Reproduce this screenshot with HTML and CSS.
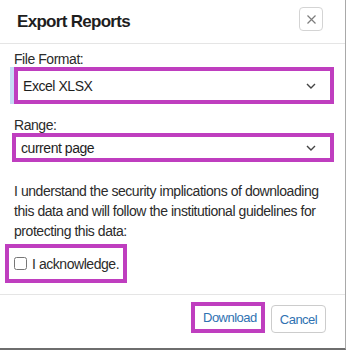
FILE: index.html
```html
<!DOCTYPE html>
<html>

<head>
    <meta charset="utf-8">
    <title>Export Reports</title>
    <link rel="stylesheet" href="styles.css">
</head>

<body>

    <div class="modal">
        <div class="modal-header">
            <h4 class="modal-title">Export Reports</h4>
            <button type="button" class="close">
                <svg width="9" height="9" viewBox="0 0 9 9">
                    <path d="M0.5 0.5L8.5 8.5M8.5 0.5L0.5 8.5" stroke="#7d7d7d" stroke-width="1.2" fill="none"/>
                </svg>
            </button>
        </div>

        <div class="modal-body">
            <label class="field-label">File Format:</label>
            <div class="hl hl-select hl-focus">
                <div class="select">
                    <span>Excel XLSX</span>
                    <svg width="10" height="6" viewBox="0 0 10 6">
                        <polyline points="1,1 5,5 9,1" stroke="#444" stroke-width="1.4" fill="none"/>
                    </svg>
                </div>
            </div>

            <label class="field-label range">Range:</label>
            <div class="hl hl-select hl-range">
                <div class="select">
                    <span>current page</span>
                    <svg width="10" height="6" viewBox="0 0 10 6">
                        <polyline points="1,1 5,5 9,1" stroke="#444" stroke-width="1.4" fill="none"/>
                    </svg>
                </div>
            </div>

            <p class="notice">I understand the security implications of downloading this data and will follow the institutional guidelines for protecting this data:</p>

            <label class="hl hl-check">
                <input type="checkbox" class="check">
                <span>I acknowledge.</span>
            </label>
        </div>

        <div class="modal-footer">
            <div class="actions">
                <div class="hl hl-btn">
                    <button type="button" class="btn-link">Download</button>
                </div>
                <button type="button" class="btn">Cancel</button>
            </div>
        </div>
    </div>

</body>

</html>
```

FILE: styles.css
```css
* {
    box-sizing: border-box;
}

body {
    margin: 0;
    font-family: "Liberation Sans", Arial, sans-serif;
    font-size: 14px;
    letter-spacing: -0.45px;
    color: #2b2b2b;
    background: #fff;
}

.modal {
    width: 346px;
    height: 350px;
    border-right: 1px solid #a9a9a9;
    border-bottom: 2px solid #6e6e6e;
    display: flex;
    flex-direction: column;
}

.modal-header {
    height: 44px;
    border-bottom: 1px solid #e5e5e5;
    display: flex;
    justify-content: space-between;
    align-items: flex-start;
    padding: 0 22px 0 17px;
}

.modal-title {
    margin: 12px 0 0;
    font-size: 17px;
    letter-spacing: -0.7px;
    line-height: 20px;
    font-weight: bold;
    color: #1e1e1e;
}

.close {
    margin-top: 7px;
    width: 24px;
    height: 24px;
    padding: 0;
    border: 1px solid #d4d4d4;
    border-radius: 4px;
    background: #fff;
    display: flex;
    align-items: center;
    justify-content: center;
}

.modal-body {
    padding: 8px 12px 11px 14px;
}

.field-label {
    display: block;
    line-height: 15px;
}

.range {
    margin-top: 14px;
}

/* magenta highlight boxes */
.hl {
    border: 4px solid #bf3ebf;
    background: #fff;
}

.hl-select {
    width: 320px;
    height: 37px;
}

.hl-focus {
    box-shadow: -4px 0 0 #c7dbf5;
}

.hl-range {
    margin-left: -2px;
    width: 322px;
    height: 29px;
}

.select {
    height: 100%;
    display: flex;
    align-items: center;
    justify-content: space-between;
    padding: 0 14px 0 5px;
    color: #1e1e1e;
}

.notice {
    margin: 19px 0 0;
    width: 320px;
    line-height: 20px;
}

.hl-check {
    display: flex;
    align-items: center;
    gap: 5px;
    margin: 3px 0 0 -9px;
    width: 122px;
    height: 39px;
    padding-left: 5px;
}

.check {
    margin: 0;
    width: 13px;
    height: 13px;
}

.modal-footer {
    flex: 1;
    border-top: 1px solid #e5e5e5;
    padding: 7px 19px 0 0;
}

.actions {
    display: flex;
    justify-content: flex-end;
    align-items: flex-end;
    gap: 6px;
}

.hl-btn {
    width: 74px;
    height: 31px;
    padding-left: 8px;
    display: flex;
    align-items: center;
}

.btn-link {
    border: 0;
    background: none;
    padding: 0;
    font-family: inherit;
    font-size: 13px;
    letter-spacing: -0.5px;
    color: #2f72b2;
}

.btn {
    width: 55px;
    height: 28px;
    padding: 0;
    border: 1px solid #ccc;
    border-radius: 4px;
    background: #fff;
    font-family: inherit;
    font-size: 13px;
    letter-spacing: -0.5px;
    color: #2f72b2;
}
```
